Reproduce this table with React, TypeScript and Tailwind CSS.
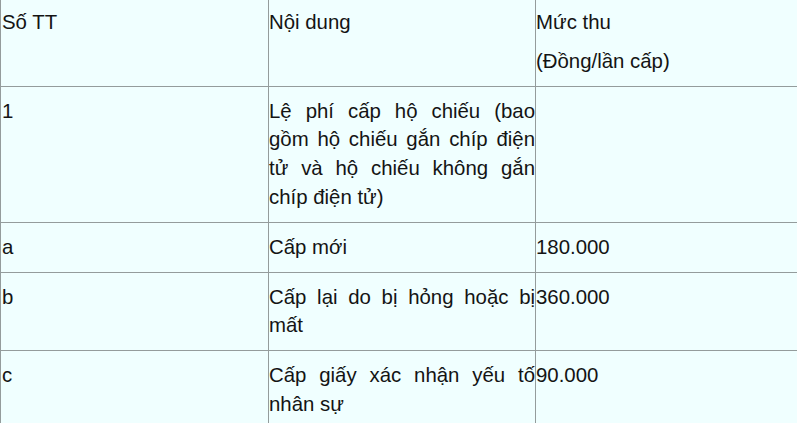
import React from "react";

const J = ({ children }: { children: React.ReactNode }) => (
  <span className="block text-justify [text-align-last:justify] whitespace-nowrap">{children}</span>
);

const cell = "border-l border-[#949c9c] min-w-0";
const p = "my-[10px]";

export default function App() {
  return (
    <div
      className="w-[797px] h-[423px] overflow-hidden bg-[#f0ffff] text-[#141414] text-[20.4px] leading-[28.8px]"
      style={{ fontFamily: '"Liberation Sans", Arial, sans-serif' }}
    >
      <div className="mt-[-4px] w-[900px]">
        {/* header */}
        <div className="grid grid-cols-[268px_267px_1fr] border-t border-[#949c9c]">
          <div className={cell + " pl-[1px] pt-[1px]"}>
            <p className={p}>Số TT</p>
          </div>
          <div className={cell + " pt-[1px]"}>
            <p className={p}>Nội dung</p>
          </div>
          <div className={cell + " pt-[1px]"}>
            <p className="mt-[10px] mb-[9px]">Mức thu</p>
            <p className={p}>(Đồng/lần cấp)</p>
          </div>
        </div>
        {/* row 1 */}
        <div className="grid grid-cols-[268px_267px_1fr] border-t border-[#949c9c]">
          <div className={cell + " pl-[1px]"}>
            <p className={p}>1</p>
          </div>
          <div className={cell}>
            <p className={p}>
              <J>Lệ phí cấp hộ chiếu (bao</J>
              <J>gồm hộ chiếu gắn chíp điện</J>
              <J>tử và hộ chiếu không gắn</J>
              <span className="block">chíp điện tử)</span>
            </p>
          </div>
          <div className={cell}></div>
        </div>
        {/* row a */}
        <div className="grid grid-cols-[268px_267px_1fr] border-t border-[#949c9c]">
          <div className={cell + " pl-[1px]"}>
            <p className={p}>a</p>
          </div>
          <div className={cell}>
            <p className={p}>Cấp mới</p>
          </div>
          <div className={cell}>
            <p className={p}>180.000</p>
          </div>
        </div>
        {/* row b */}
        <div className="grid grid-cols-[268px_267px_1fr] border-t border-[#949c9c]">
          <div className={cell + " pl-[1px]"}>
            <p className={p}>b</p>
          </div>
          <div className={cell}>
            <p className={p}>
              <J>Cấp lại do bị hỏng hoặc bị</J>
              <span className="block">mất</span>
            </p>
          </div>
          <div className={cell}>
            <p className={p}>360.000</p>
          </div>
        </div>
        {/* row c */}
        <div className="grid grid-cols-[268px_267px_1fr] border-t border-[#949c9c]">
          <div className={cell + " pl-[1px]"}>
            <p className={p}>c</p>
          </div>
          <div className={cell}>
            <p className={p}>
              <J>Cấp giấy xác nhận yếu tố</J>
              <span className="block">nhân sự</span>
            </p>
          </div>
          <div className={cell}>
            <p className={p}>90.000</p>
          </div>
        </div>
      </div>
    </div>
  );
}
